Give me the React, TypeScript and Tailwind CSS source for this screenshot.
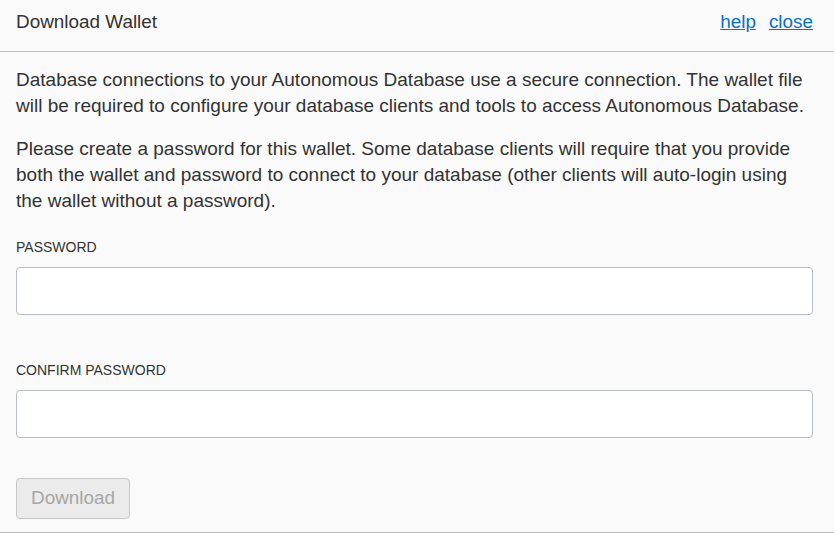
import React from 'react';

const DownloadWallet: React.FC = () => {
  return (
    <div
      className="w-[834px] h-[533px] bg-[#fafafa] text-[#333333] border-b border-[#bdbdbd] overflow-hidden"
      style={{ fontFamily: '"Liberation Sans", Arial, sans-serif' }}
    >
      <div className="h-[52px] flex items-center justify-between pl-4 pr-[21px] border-b border-[#bdbdbd]">
        <h1 className="text-[18.9px] leading-none pb-[7px]">Download Wallet</h1>
        <div className="flex gap-[13px] text-[18.9px] leading-none pb-[7px] text-[#0572ce]">
          <a href="#" className="underline">
            help
          </a>
          <a href="#" className="underline">
            close
          </a>
        </div>
      </div>
      <div className="pl-4 pr-[21px] pt-[15px]">
        <p className="text-[19px] leading-[26px]">
          Database connections to your Autonomous Database use a secure connection. The wallet file
          will be required to configure your database clients and tools to access Autonomous Database.
        </p>
        <p className="text-[19px] leading-[26px] mt-[17px]">
          Please create a password for this wallet. Some database clients will require that you provide
          both the wallet and password to connect to your database (other clients will auto-login using
          the wallet without a password).
        </p>
        <label className="block text-[14px] leading-4 mt-[25px]">PASSWORD</label>
        <input
          type="password"
          className="block w-full h-[48px] mt-[12px] bg-white border border-[#b8bcc4] rounded-[4px]"
        />
        <label className="block text-[14px] leading-4 mt-[47px]">CONFIRM PASSWORD</label>
        <input
          type="password"
          className="block w-full h-[48px] mt-[12px] bg-white border border-[#b8bcc4] rounded-[4px]"
        />
        <button
          disabled
          className="mt-[40px] w-[114px] h-[41px] rounded-[4px] border border-[#c8c8c8] bg-[#ebebeb] text-[#a6a6a6] text-[18.9px]"
        >
          Download
        </button>
      </div>
    </div>
  );
};

export default function App() {
  return <DownloadWallet />;
}
